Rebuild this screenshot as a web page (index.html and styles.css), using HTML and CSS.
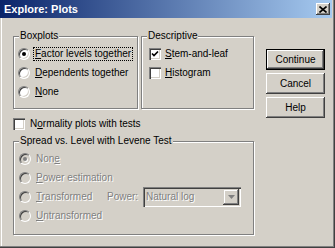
FILE: index.html
```html
<!DOCTYPE html>
<html>
<head>
<meta charset="utf-8">
<link rel="stylesheet" href="styles.css">
</head>
<body>
<div class="window">
  <div class="titlebar">
    <span class="title">Explore: Plots</span>
    <span class="close"><svg width="8" height="7" viewBox="0 0 8 7"><path d="M0.5 0.5 L7.5 6.5 M7.5 0.5 L0.5 6.5" stroke="#000" stroke-width="1.6" fill="none"/></svg></span>
  </div>
  <div class="body">
    <div class="main">
      <div class="top-row">
        <div class="group boxplots">
          <span class="legend">Boxplots</span>
          <div class="row"><span class="radio checked"></span><span class="label focus"><u>F</u>actor levels together</span></div>
          <div class="row"><span class="radio"></span><span class="label"><u>D</u>ependents together</span></div>
          <div class="row"><span class="radio"></span><span class="label"><u>N</u>one</span></div>
        </div>
        <div class="group descriptive">
          <span class="legend">Descriptive</span>
          <div class="row"><span class="check"><svg width="12" height="12" viewBox="0 0 12 12"><path d="M3 5.5 L5 7.5 L9 3.5" stroke="#000" stroke-width="1.7" fill="none"/></svg></span><span class="label clabel"><u>S</u>tem-and-leaf</span></div>
          <div class="row"><span class="check"></span><span class="label clabel"><u>H</u>istogram</span></div>
        </div>
      </div>
      <div class="row normality"><span class="check"></span><span class="label nlabel">N<u>o</u>rmality plots with tests</span></div>
      <div class="group spread">
        <span class="legend">Spread vs. Level with Levene Test</span>
        <div class="row disabled"><span class="radio checked"></span><span class="label">Non<u>e</u></span></div>
        <div class="row disabled"><span class="radio"></span><span class="label"><u>P</u>ower estimation</span></div>
        <div class="row disabled"><span class="radio"></span><span class="label tlabel"><u>T</u>ransformed</span><span class="power">Power:</span>
          <span class="dropdown"><span class="dd-text">Natural log</span><span class="dd-btn"><svg width="7" height="4" viewBox="0 0 7 4"><path d="M0 0 H7 L3.5 4 Z" fill="#808080"/></svg></span></span>
        </div>
        <div class="row disabled"><span class="radio"></span><span class="label"><u>U</u>ntransformed</span></div>
      </div>
    </div>
    <div class="buttons">
      <div class="btn default">Continue</div>
      <div class="btn">Cancel</div>
      <div class="btn">Help</div>
    </div>
  </div>
</div>
</body>
</html>
```
FILE: styles.css
```css
* { box-sizing: border-box; }
html, body { margin: 0; padding: 0; }
body {
  width: 335px; height: 248px; overflow: hidden;
  background: #d4d0c8;
  font-family: "Liberation Sans", Arial, sans-serif;
  font-size: 10px; color: #000;
}
.window {
  width: 335px; height: 248px;
  background: #d4d0c8;
  box-shadow: inset -1px -1px 0 #404040, inset -2px -2px 0 #808080, inset 1px 0 0 #d4d0c8, inset 2px 0 0 #fff;
}
.titlebar {
  height: 18px; margin-right: 3px;
  background: linear-gradient(to right, #0a246a, #a6caf0);
  display: flex; align-items: center; justify-content: space-between;
  padding: 0 2px 0 4px;
}
.title { color: #fff; font-weight: bold; font-size: 11px; }
.close {
  width: 14px; height: 12px; background: #d4d0c8;
  box-shadow: inset -1px -1px 0 #404040, inset 1px 1px 0 #fff, inset -2px -2px 0 #808080;
  display: flex; align-items: center; justify-content: center;
}
.close svg { display: block; }
.body { display: flex; padding: 18px 0 0 13px; }
.main { width: 241px; display: flex; flex-direction: column; }
.top-row { display: flex; gap: 3px; }
.group {
  position: relative;
  border: 1px solid #808080;
  box-shadow: inset 1px 1px 0 #fff, 1px 1px 0 #fff;
}
.legend {
  position: absolute; top: -7px; left: 5px;
  padding: 0 1px; background: #d4d0c8; line-height: 12px;
}
.boxplots { width: 125px; height: 73px; padding: 7px 0 0 4px; }
.descriptive { width: 113px; height: 73px; padding: 7px 0 0 7px; }
.row { display: flex; align-items: center; height: 19px; white-space: nowrap; }
.radio {
  flex: none; position: relative;
  width: 12px; height: 12px; border-radius: 50%;
  border: 1px solid; border-color: #808080 #fff #fff #808080;
  background: #fff;
  box-shadow: inset 1px 1px 0 #404040, inset -1px -1px 0 #d4d0c8;
}
.radio.checked::after {
  content: ""; position: absolute; left: 3px; top: 3px;
  width: 4px; height: 4px; border-radius: 50%; background: #000;
}
.label { margin-left: 5px; line-height: 12px; }
.focus { outline: 1px dotted #000; outline-offset: 0; padding: 0 1px; margin-left: 4px; }
.check {
  flex: none; width: 12px; height: 12px; background: #fff;
  box-shadow: inset 1px 1px 0 #808080, inset 2px 2px 0 #404040, inset -1px -1px 0 #fff, inset -2px -2px 0 #d4d0c8;
}
.check svg { display: block; }
.clabel { margin-left: 4px; }
.normality { margin-top: 5px; }
.nlabel { margin-left: 5px; }
.spread { margin-top: 8px; height: 94px; padding: 7px 0 0 5px; }
.disabled { color: #808080; text-shadow: 1px 1px 0 #fff; }
.disabled .radio { background: #d4d0c8; }
.disabled .radio.checked::after { background: #808080; box-shadow: 1px 1px 0 #fff; }
.tlabel { width: 71px; flex: none; }
.power { width: 36px; flex: none; }
.dropdown {
  flex: none; width: 98px; height: 20px; padding: 2px;
  display: flex; align-items: center; justify-content: space-between;
  background: #d4d0c8;
  box-shadow: inset 1px 1px 0 #808080, inset 2px 2px 0 #404040, inset -1px -1px 0 #fff, inset -2px -2px 0 #d4d0c8;
}
.dd-text { padding-left: 1px; line-height: 12px; }
.dd-btn {
  width: 16px; height: 16px; background: #d4d0c8;
  display: flex; align-items: center; justify-content: center;
  box-shadow: inset -1px -1px 0 #404040, inset 1px 1px 0 #d4d0c8, inset -2px -2px 0 #808080, inset 2px 2px 0 #fff;
}
.dd-btn svg { display: block; }
.buttons { margin: 13px 0 0 12px; display: flex; flex-direction: column; gap: 3px; }
.btn {
  width: 59px; height: 21px;
  display: flex; align-items: center; justify-content: center;
  background: #d4d0c8;
  box-shadow: inset -1px -1px 0 #404040, inset 1px 1px 0 #fff, inset -2px -2px 0 #808080, inset 2px 2px 0 #d4d0c8;
}
.btn.default { border: 1px solid #000; }
```
